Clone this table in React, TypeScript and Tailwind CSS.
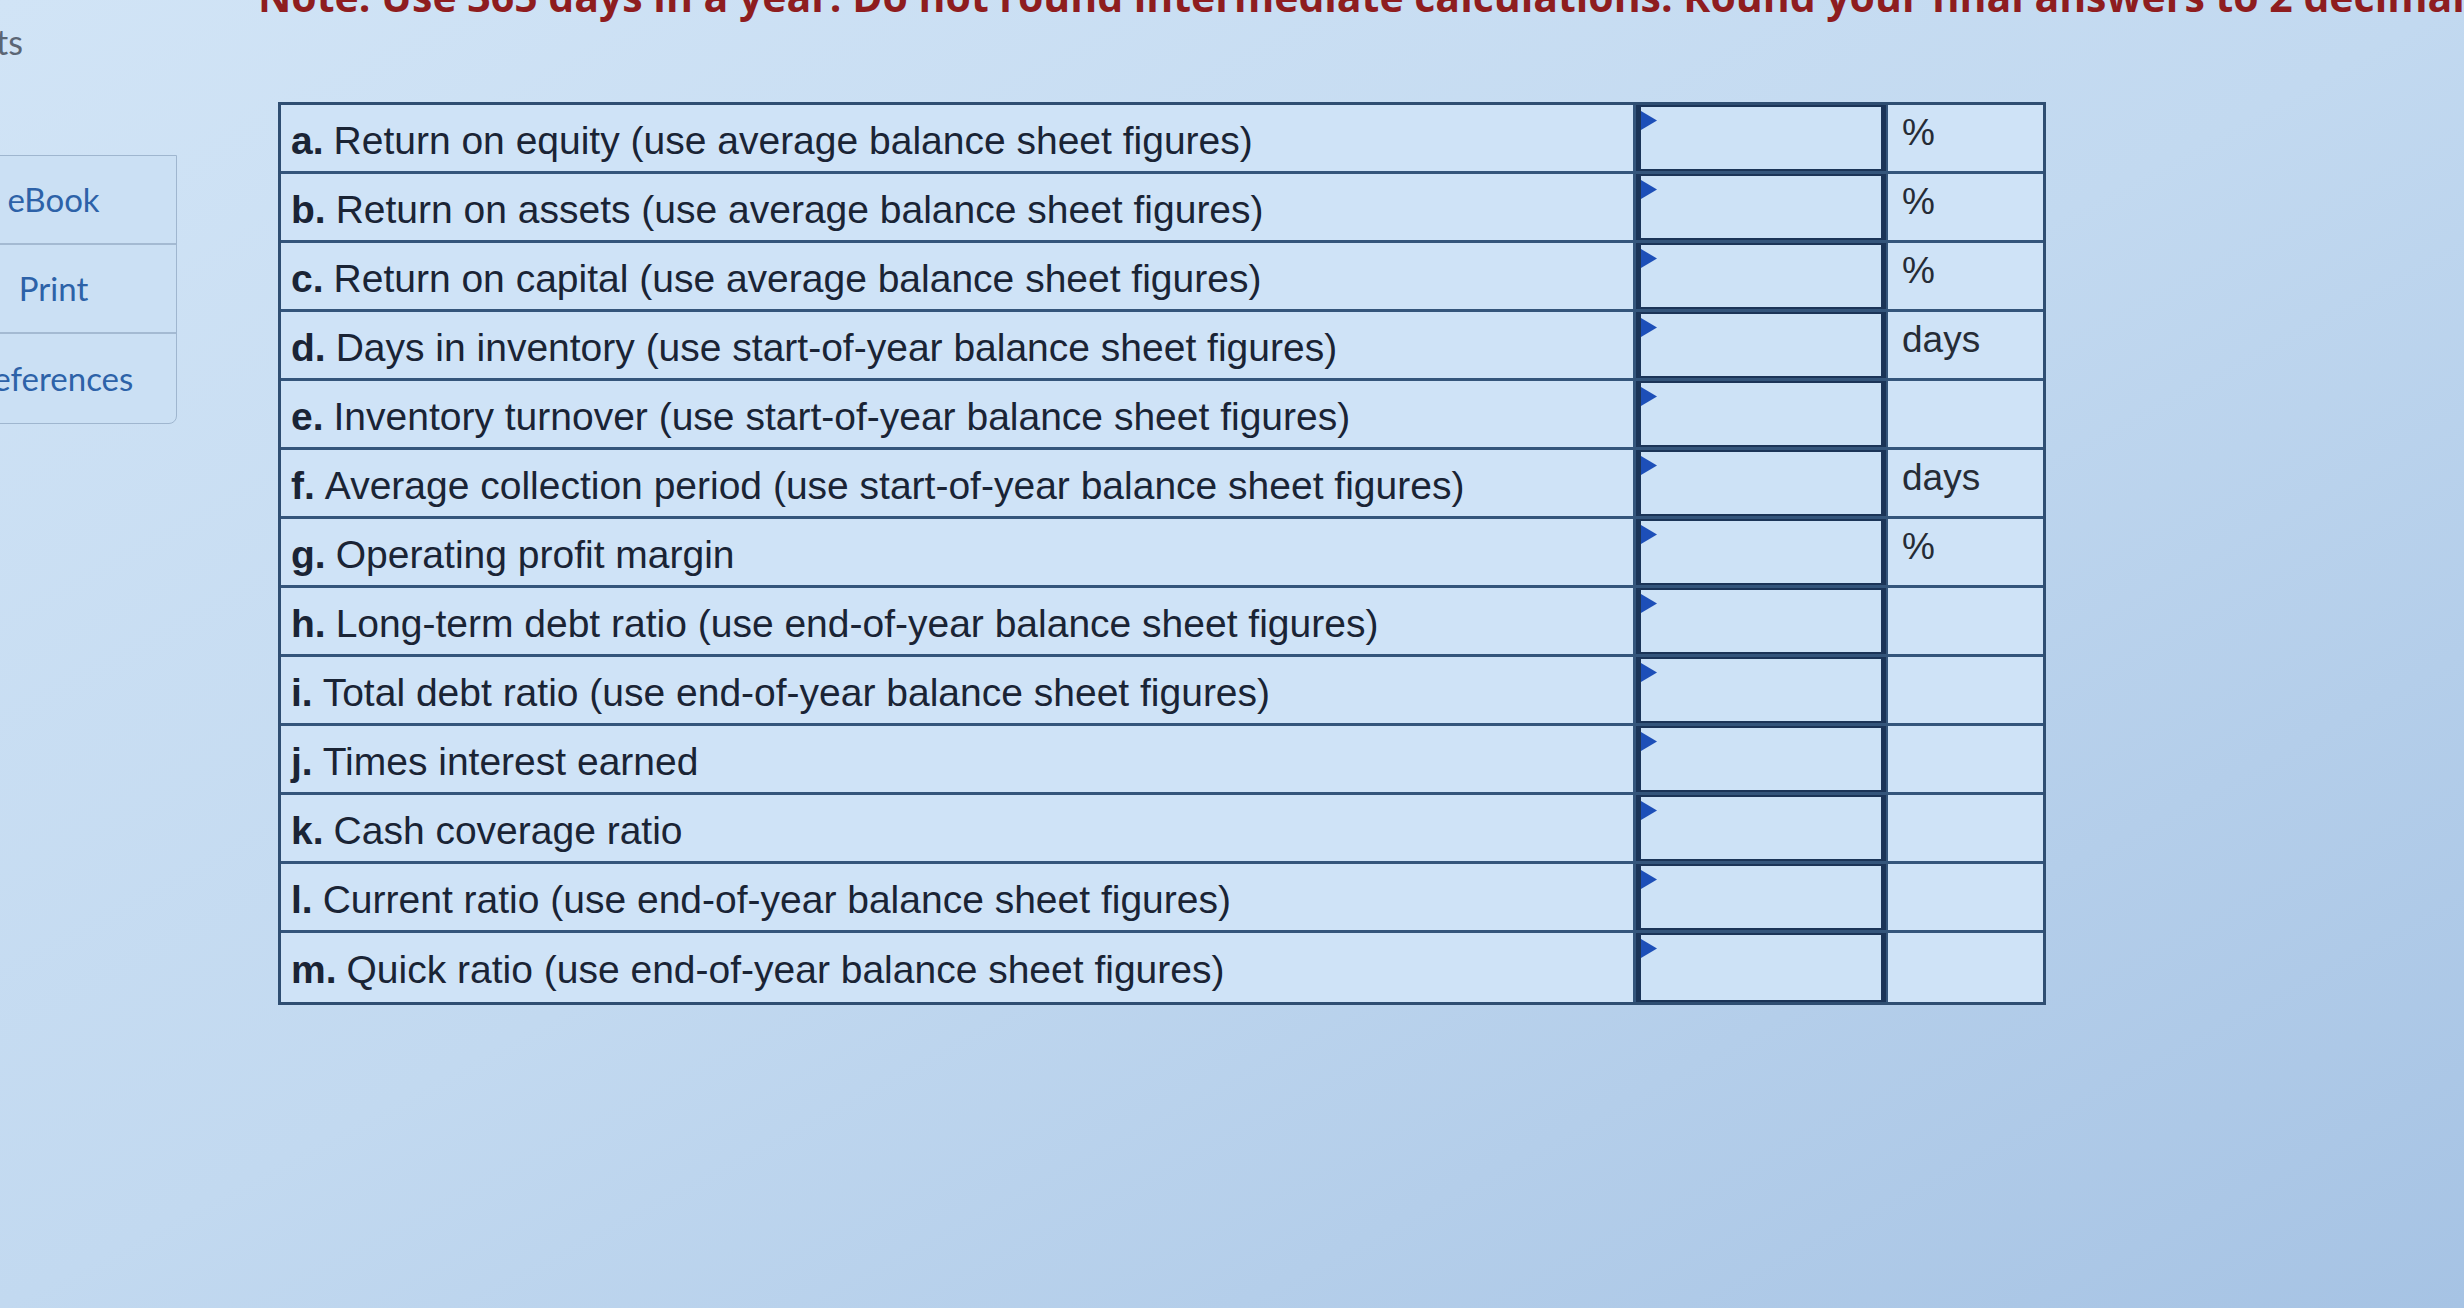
import React from "react";

const rows = [
  { key: "a.", text: "Return on equity (use average balance sheet figures)", unit: "%" },
  { key: "b.", text: "Return on assets (use average balance sheet figures)", unit: "%" },
  { key: "c.", text: "Return on capital (use average balance sheet figures)", unit: "%" },
  { key: "d.", text: "Days in inventory (use start-of-year balance sheet figures)", unit: "days" },
  { key: "e.", text: "Inventory turnover (use start-of-year balance sheet figures)", unit: "" },
  { key: "f.", text: "Average collection period (use start-of-year balance sheet figures)", unit: "days" },
  { key: "g.", text: "Operating profit margin", unit: "%" },
  { key: "h.", text: "Long-term debt ratio (use end-of-year balance sheet figures)", unit: "" },
  { key: "i.", text: "Total debt ratio (use end-of-year balance sheet figures)", unit: "" },
  { key: "j.", text: "Times interest earned", unit: "" },
  { key: "k.", text: "Cash coverage ratio", unit: "" },
  { key: "l.", text: "Current ratio (use end-of-year balance sheet figures)", unit: "" },
  { key: "m.", text: "Quick ratio (use end-of-year balance sheet figures)", unit: "" },
];

const sideItems = ["eBook", "Print", "References"];

// little blue flag shown in the corner of each answer box
const Flag = () => (
  <svg width="17" height="19" viewBox="0 0 17 19" className="absolute left-0 top-[4px]">
    <polygon points="0,0 16,9.5 0,19" fill="#1d4fb8" />
  </svg>
);

export default function App() {
  return (
    <div className="h-[1308px] w-[2464px] overflow-hidden bg-gradient-to-br from-[#d1e4f6] via-[#c2d9f0] to-[#a6c3e4]">
      <div
        className="-mt-[24px] whitespace-nowrap pl-[258px] text-[41px] font-bold leading-none text-[#8e1d1f]"
        style={{ fontFamily: '"Open Sans", "Liberation Sans", sans-serif' }}
      >
        Note: Use 365 days in a year. Do not round intermediate calculations. Round your final answers to 2 decimal places.
      </div>

      <div className="flex items-start">
        {/* left rail */}
        <div className="w-[278px] shrink-0" style={{ fontFamily: "Lato, sans-serif" }}>
          <div className="-ml-[4px] pt-[8px] text-[34px] leading-none text-[#5b6675]">ts</div>
          <div className="-ml-[70px] mt-[96px] w-[247px] overflow-hidden rounded-br-[8px] border border-[#9fb6cf] bg-[#cbe0f4]">
            {sideItems.map((s, i) => (
              <div
                key={s}
                className={
                  "flex h-[89px] items-center justify-center text-[33px] text-[#2d62a8] " +
                  (i < sideItems.length - 1 ? "border-b-[2px] border-[#a4bad2]" : "")
                }
              >
                {s}
              </div>
            ))}
          </div>
        </div>

        {/* ratio table */}
        <div
          className="mt-[85px] w-[1768px] shrink-0 border-[3px] border-[#2f4e72] bg-[#cfe3f7]"
          style={{ fontFamily: '"Liberation Sans", Arial, sans-serif' }}
        >
          {rows.map((r, i) => (
            <div
              key={r.key}
              className={
                "grid h-[69px] grid-cols-[1355px_250px_157px] " +
                (i < rows.length - 1 ? "border-b-[3px] border-[#34557b]" : "")
              }
            >
              <div className="flex items-center border-r-[3px] border-[#34557b] pl-[10px] pt-[4px] text-[39px] leading-none text-[#1a2435]">
                <span className="font-bold">{r.key}</span>
                <span className="ml-[10px]">{r.text}</span>
              </div>
              <div className="relative border-x-[5px] border-y-[2px] border-[#1b3457] bg-[#cde2f6]">
                <Flag />
              </div>
              <div className="border-l-[2px] border-[#34557b] pl-[14px] pt-[9px] text-[37px] leading-none text-[#262c36]">
                {r.unit}
              </div>
            </div>
          ))}
        </div>
      </div>
    </div>
  );
}
